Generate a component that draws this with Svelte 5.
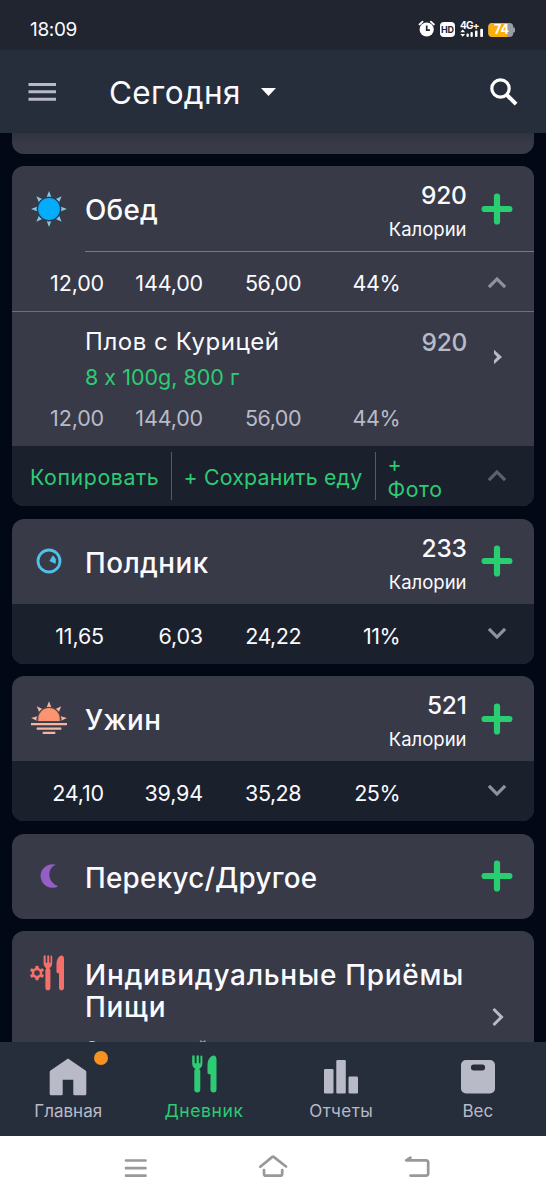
<script>
  const meals = [
    { name: 'Полдник', icon: 'dial', calories: '233', values: ['11,65', '6,03', '24,22', '11%'] },
    { name: 'Ужин', icon: 'sunset', calories: '521', values: ['24,10', '39,94', '35,28', '25%'] }
  ];
  const lunch = ['12,00', '144,00', '56,00', '44%'];
  const rays = [0, 45, 90, 135, 180, 225, 270, 315];
</script>

{#snippet plus()}
  <svg class="plus" width="32" height="32" viewBox="0 0 32 32"><path d="M16 3.6v24.8M3.6 16h24.8" /></svg>
{/snippet}

{#snippet chevron(dir, dim)}
  <svg class="chevron" class:down={dir === 'down'} class:dim width="20" height="14" viewBox="0 0 20 14"><path d="M1.9 11.2 10 3l8.1 8.2" /></svg>
{/snippet}

{#snippet values(list, muted)}
  <div class="values" class:muted>
    {#each list as v}<span>{v}</span>{/each}
  </div>
{/snippet}

{#snippet cutlery()}
  <path d="M1.2 1.5v7.2c0 3.2 2 4.3 3.3 5.3-.9.6-1.2 1.2-1.2 2.4v18.2a3 3 0 0 0 6 0V16.400c0-1.200-.3-1.800-1.200-2.400 1.300-1 3.300-2.100 3.300-5.300V1.500a1 1 0 0 0-2 0V8.200h-1.500V1.500a1.200 1.200 0 0 0-2.400 0V8.200H3.700V1.500a1.200 1.200 0 0 0-2.500 0Z" />
  <path d="M25.500 4.500v30a3 3 0 0 1-6 0V19.300h-1.300c-1 0-1.700-.7-1.700-1.700V10c0-5 2.800-9.500 6.300-9.500 1.800 0 2.700 1.800 2.700 4Z" />
{/snippet}

<div class="screen">
  <div class="status">
    <span class="clock">18:09</span>
    <svg class="indicators" width="98" height="20" viewBox="0 0 98 20">
      <g fill="#fff">
        <circle cx="8.700" cy="10.500" r="7.100" />
        <path d="M1.500 5.500 4.600 2.600M15.900 5.500l-3.100-2.900" stroke="#fff" stroke-width="1.800" stroke-linecap="round" />
        <path d="M8.700 6.500v4.600h3.200" fill="none" stroke="#20252f" stroke-width="1.700" />
        <rect x="22" y="3" width="15" height="15" rx="4" />
        <text x="29.500" y="13.800" text-anchor="middle" class="hd">HD</text>
        <text x="42" y="10" class="net">4G+</text>
        <path d="m42.300 13.200 2.400-2.600 2.400 2.600ZM42.300 15l2.400 2.700 2.400-2.700Z" />
        <rect x="48.500" y="14.500" width="2.300" height="3.500" rx="1" />
        <rect x="52.500" y="13" width="2.300" height="5" rx="1" />
        <rect x="57" y="11.500" width="2.500" height="6.500" rx="1" />
        <rect x="62.200" y="9.800" width="2.800" height="8.200" rx="1" />
      </g>
      <rect x="70.300" y="4" width="25" height="14" rx="4" fill="#999ca4" />
      <path d="M74.300 4h15v14h-15a4 4 0 0 1-4-4V8a4 4 0 0 1 4-4Z" fill="#f9ae0c" />
      <rect x="94.500" y="8.500" width="2.500" height="5" rx="1" fill="#999ca4" />
      <text x="83.500" y="15.300" text-anchor="middle" class="batt">74</text>
    </svg>
  </div>

  <header>
    <svg class="burger" width="28" height="20" viewBox="0 0 28 20"><path d="M.5 2.500h27.500M.5 9.800h27.500M.5 17.200h27.500" /></svg>
    <h1>Сегодня</h1>
    <svg class="caret" width="15" height="8" viewBox="0 0 15 8"><path d="M0 0h15L7.500 8Z" fill="#fff" /></svg>
    <svg class="search" width="30" height="30" viewBox="0 0 30 30"><circle cx="11.500" cy="11.500" r="8.700" /><path d="m17.800 17.800 9.300 9.400" /></svg>
  </header>

  <main>
    <div class="card stub"></div>

    <section class="card">
      <div class="head">
        <svg class="icon" width="36" height="36" viewBox="-18 -18 36 36">
          {#each rays as a}
            <path d="M0-17.900-2.300-12Q0-13 2.300-12Z" transform="rotate({a})" fill="#86cbe6" />
          {/each}
          <circle r="12" fill="#283d55" /><circle r="10.900" fill="#04adfc" />
        </svg>
        <h2 class="tight">Обед</h2>
        <div class="energy"><b>920</b><span>Калории</span></div>
        {@render plus()}
      </div>
      <div class="row open">{@render values(lunch, false)}{@render chevron('up', false)}</div>
      <div class="food">
        <div class="food-name"><span>Плов с Курицей</span><b>920</b></div>
        <div class="portion">8 x 100g, 800 г</div>
        {@render values(lunch, true)}
        <svg class="next" width="10" height="16" viewBox="0 0 10 16"><path d="M1 .8v4L4.200 8 1 11.200v4L9 8Z" /></svg>
      </div>
      <div class="actions">
        <span class="copy">Копировать</span>
        <span class="save">+ Сохранить еду</span>
        <span class="photo">+<br />Фото</span>
        {@render chevron('up', true)}
      </div>
    </section>

    {#each meals as m}
      <section class="card">
        <div class="head">
          {#if m.icon === 'dial'}
            <svg class="icon" width="36" height="36" viewBox="-18 -18 36 36">
              <circle r="11" fill="none" stroke="#50bfea" stroke-width="2.800" />
              <path d="M3.800-5.200A6.500 6.500 0 0 1 6.300 2.400L.8 0Z" fill="#50bfea" stroke="#50bfea" stroke-width=".6" stroke-linejoin="round" />
            </svg>
          {:else}
            <svg class="icon" width="36" height="36" viewBox="-18 -18 36 36">
              {#each [-90, -45, 0, 45, 90] as a}
                <path d="M0-17.900-2.300-12Q0-13 2.300-12Z" transform="translate(0 .2) rotate({a * 0.96})" fill="#f5b5a2" />
              {/each}
              <path d="M-11.900 2.700V0a11.900 11.900 0 0 1 23.800 0v2.700Z" fill="#59454b" />
              <path d="M-10.700 2V-.2a10.700 10.700 0 0 1 21.400 0V2Z" fill="#fc956f" />
              <path d="M-18 5.100h36M-12.300 9.600h24.600M-6.300 13.900h12.600" stroke="#f5b5a2" stroke-width="2.200" />
            </svg>
          {/if}
          <h2>{m.name}</h2>
          <div class="energy"><b>{m.calories}</b><span>Калории</span></div>
          {@render plus()}
        </div>
        <div class="row closed">{@render values(m.values, false)}{@render chevron('down', false)}</div>
      </section>
    {/each}

    <section class="card">
      <div class="head">
        <svg class="icon" width="36" height="36" viewBox="-18 -18 36 36"><path d="M9.500 10.200A11.800 11.800 0 1 1 7-11.300C-1.500-8.500-2.500 6.500 9.500 10.200Z" transform="translate(-.2 0)" fill="#955dc6" /></svg>
        <h2 class="tight">Перекус/Другое</h2>
        {@render plus()}
      </div>
    </section>

    <section class="card custom">
      <svg class="custom-icon" width="36" height="38" viewBox="0 0 36 38" fill="#f5706a">
        <g transform="translate(7 19)">
          {#each [0, 60, 120, 180, 240, 300] as a}<rect x="-1.700" y="-7.300" width="3.400" height="4" rx="1" transform="rotate({a})" />{/each}
          <circle r="4" fill="none" stroke="#f5706a" stroke-width="2.400" />
        </g>
        <g transform="translate(12.600 1) scale(.84 .94)">{@render cutlery()}</g>
      </svg>
      <div class="custom-text">
        <h2>Индивидуальные Приёмы Пищи</h2>
        <p>Создать свой</p>
      </div>
      <svg class="more" width="14" height="20" viewBox="0 0 14 20"><path d="m2.500 2 8 8-8 8" /></svg>
    </section>
  </main>

  <nav>
    <div class="tab">
      <svg width="38" height="38" viewBox="0 0 38 38"><path d="M19 .5 36.500 12.500Q37.300 13 37.300 14v22q0 1.300-1.300 1.300H25.500q-1.200 0-1.200-1.200V21.700H13.700v14.400q0 1.200-1.200 1.200H2Q.7 37.300.7 36V14q0-1 .8-1.500Z" /></svg>
      <span>Главная</span>
      <i class="badge"></i>
    </div>
    <div class="tab active">
      <svg width="26" height="38" viewBox="0 0 26 38">{@render cutlery()}</svg>
      <span>Дневник</span>
    </div>
    <div class="tab">
      <svg width="34" height="38" viewBox="0 0 34 38"><rect y="11" width="9.500" height="24.500" rx="1.200" /><rect x="12.300" y="2" width="9.500" height="33.500" rx="1.200" /><rect x="24.500" y="18.500" width="9.500" height="17" rx="1.200" /></svg>
      <span class="wide">Отчеты</span>
    </div>
    <div class="tab">
      <svg width="34" height="38" viewBox="0 0 34 38"><path fill-rule="evenodd" d="M5 2h24a5 5 0 0 1 5 5v23.500a5 5 0 0 1-5 5H5a5 5 0 0 1-5-5V7a5 5 0 0 1 5-5Zm7.800 4.600a2.900 2.900 0 0 0 0 5.800h8.400a2.900 2.900 0 0 0 0-5.800Z" /></svg>
      <span>Вес</span>
    </div>
  </nav>

  <footer>
    <svg width="28" height="26" viewBox="0 0 28 26"><path d="M4 5.500h19.500M4 13.200h19.500M4 20.700h19.500" /></svg>
    <svg class="home" width="30" height="26" viewBox="0 0 30 26"><path d="M2.300 11.700 14 2.100q1-.8 2 0l12 9.400M6 15v3.700q0 2 2 2h14.200q2 0 2-2V15" /></svg>
    <svg class="back" width="28" height="26" viewBox="0 0 28 26"><path d="M7.500 2.700 3.200 5.400H23q2.200 0 2.200 2.200v11q0 2-2.200 2H7.500" /></svg>
  </footer>
</div>

<style>
  :global(body) { margin: 0; background: #020816; }
  .screen {
    width: 546px; height: 1200px; overflow: hidden;
    display: flex; flex-direction: column;
    background: #020816; color: #fafaff;
    font-family: Inter, "Noto Sans", sans-serif;
    font-feature-settings: "calt" 0;
  }
  h1, h2, p { margin: 0; }
  svg { display: block; flex: none; }
  b { font-weight: 500; }

  .status { height: 50px; flex: none; display: flex; justify-content: space-between; background: #20252f; }
  .clock { padding: 20px 0 0 30px; font-size: 19px; line-height: 20px; letter-spacing: -.35px; }
  .indicators { margin: 19px 30px 0 0; }
  .hd { font: 700 9px Inter, sans-serif; fill: #20252f; }
  .net { font: 700 10px Inter, sans-serif; letter-spacing: -.7px; }
  .batt { font: 700 12.500px Inter, sans-serif; fill: #fff; }

  header { height: 83px; flex: none; display: flex; align-items: center; background: #272e3b; }
  .burger { margin-left: 28px; }
  .burger path { stroke: #b8bac8; stroke-width: 3; }
  h1 { margin: 3px 0 0 53px; font-size: 31.500px; font-weight: 400; line-height: 40px; letter-spacing: .35px; width: 131px; white-space: nowrap; }
  .caret { margin-left: 20.500px; }
  .search { margin: 0 27px 0 auto; }
  .search circle, .search path { fill: none; stroke: #fff; stroke-width: 3.200; }
  .search path { stroke-width: 4; }

  main { height: 909px; flex: none; overflow: hidden; padding: 0 12px; display: flex; flex-direction: column; gap: 12.400px; }
  .card { flex: none; background: #383a47; border-radius: 12px; overflow: hidden; }
  .stub { height: 21px; border-radius: 0 0 12px 12px; background: linear-gradient(#30323f, #383a47 12px); }
  .head { height: 85px; display: flex; align-items: flex-start; }
  .icon { margin: 24.500px 0 0 18.500px; }
  h2 { margin: 28px 0 0 18.500px; font-size: 27.800px; font-weight: 500; line-height: 32px; letter-spacing: .45px; white-space: nowrap; }
  h2.tight { letter-spacing: .28px; }
  .energy { margin-left: auto; padding-top: 14px; display: flex; flex-direction: column; align-items: flex-end; }
  .energy b { font-size: 24.500px; line-height: 30px; letter-spacing: -.3px; }
  .energy span { margin-top: 7px; font-size: 18.500px; line-height: 24px; }
  .plus { margin: 26.500px 20.700px 0 14.800px; }
  h2 + .plus { margin-left: auto; }
  .plus path { stroke: #29ce71; stroke-width: 6.200; stroke-linecap: round; }

  .row { height: 60px; display: flex; align-items: center; justify-content: space-between; padding-right: 26.800px; box-sizing: border-box; }
  .row.open { border-bottom: 1.500px solid #6d6f7c; background: linear-gradient(#777986, #777986) 73px 0 / 449px 1px no-repeat; height: 61px; padding-top: 3px; }
  .row.closed { background: #1b202d; padding-top: 4px; }
  .values { display: grid; grid-template-columns: 92px 99px 98px 99px; text-align: right; font-size: 21.500px; line-height: 26px; letter-spacing: -.15px; }
  .values span:nth-child(n + 3) { letter-spacing: -.5px; }
  .values.muted { color: #b8bac8; }
  .chevron path { fill: none; stroke: #8f919e; stroke-width: 3.200; }
  .chevron.down { transform: scaleY(-1); margin-top: -6px; }
  .chevron.dim path { stroke: #5d606d; }

  .food { height: 134px; box-sizing: border-box; padding-top: 15px; position: relative; }
  .food-name { display: flex; justify-content: space-between; padding: 0 67px 0 73px; font-size: 24px; line-height: 30px; letter-spacing: .55px; }
  .food-name b { color: #b8bac8; font-size: 24.500px; letter-spacing: -.3px; }
  .portion { margin: 7px 0 0 73px; color: #2dcb74; font-size: 21.500px; line-height: 26px; }
  .food .values { margin-top: 15px; }
  .next { position: absolute; right: 31px; top: 37px; }
  .next path { fill: #b8bac8; }

  .actions { height: 60px; display: flex; align-items: center; background: #1b202d; color: #2dcb74; font-size: 21.300px; line-height: 25.500px; white-space: nowrap; }
  .actions span { height: 48px; display: flex; align-items: center; box-sizing: border-box; }
  .actions .copy { width: 160px; padding: 3px 0 0 18px; border-right: 1.500px solid #565a66; letter-spacing: .6px; }
  .actions .save { width: 203.500px; padding: 3px 0 0 11.500px; border-right: 1.500px solid #565a66; letter-spacing: .2px; }
  .actions .photo { display: block; height: 51px; margin: 2px 0 0 12px; letter-spacing: .6px; }
  .actions .chevron { margin: 0 26.800px 0 auto; }

  .custom { height: 140px; display: flex; align-items: flex-start; }
  .custom-icon { margin: 23px 0 0 18px; }
  .custom-text { width: 400px; margin-left: 19px; }
  .custom h2 { margin: 28px 0 0; font-size: 28px; white-space: normal; letter-spacing: .7px; }
  .custom p { font-size: 18.500px; line-height: 24px; margin-top: 13px; color: #b8bac8; }
  .more { margin: 76px 0 0 5.500px; }
  .more path { fill: none; stroke: #b8bac8; stroke-width: 3; }

  nav { height: 94px; flex: none; display: grid; grid-template-columns: repeat(4, 1fr); background: #272e3b; color: #b8bac8; }
  .tab { position: relative; display: flex; flex-direction: column; align-items: center; padding-top: 16px; }
  .tab svg { fill: #b8bac8; }
  .tab span { margin-top: 4px; font-size: 17px; line-height: 22px; }
  .tab .wide { letter-spacing: .45px; }
  .tab.active { color: #2dcb74; padding: 13px 1.500px 0 0; }
  .tab.active svg { fill: #2dcb74; }
  .tab.active span { margin-top: 7px; font-size: 17.500px; letter-spacing: .6px; }
  .badge { position: absolute; left: 94px; top: 9px; width: 14px; height: 14px; border-radius: 50%; background: #f69222; }

  footer { flex: 1; display: flex; align-items: flex-start; padding: 19px 0 0 122px; background: #fff; }
  footer .home { margin-left: 107.700px; }
  footer .back { margin-left: 115.500px; }
  footer path { fill: none; stroke: #999; stroke-width: 2.700; stroke-linecap: round; stroke-linejoin: round; }
</style>
